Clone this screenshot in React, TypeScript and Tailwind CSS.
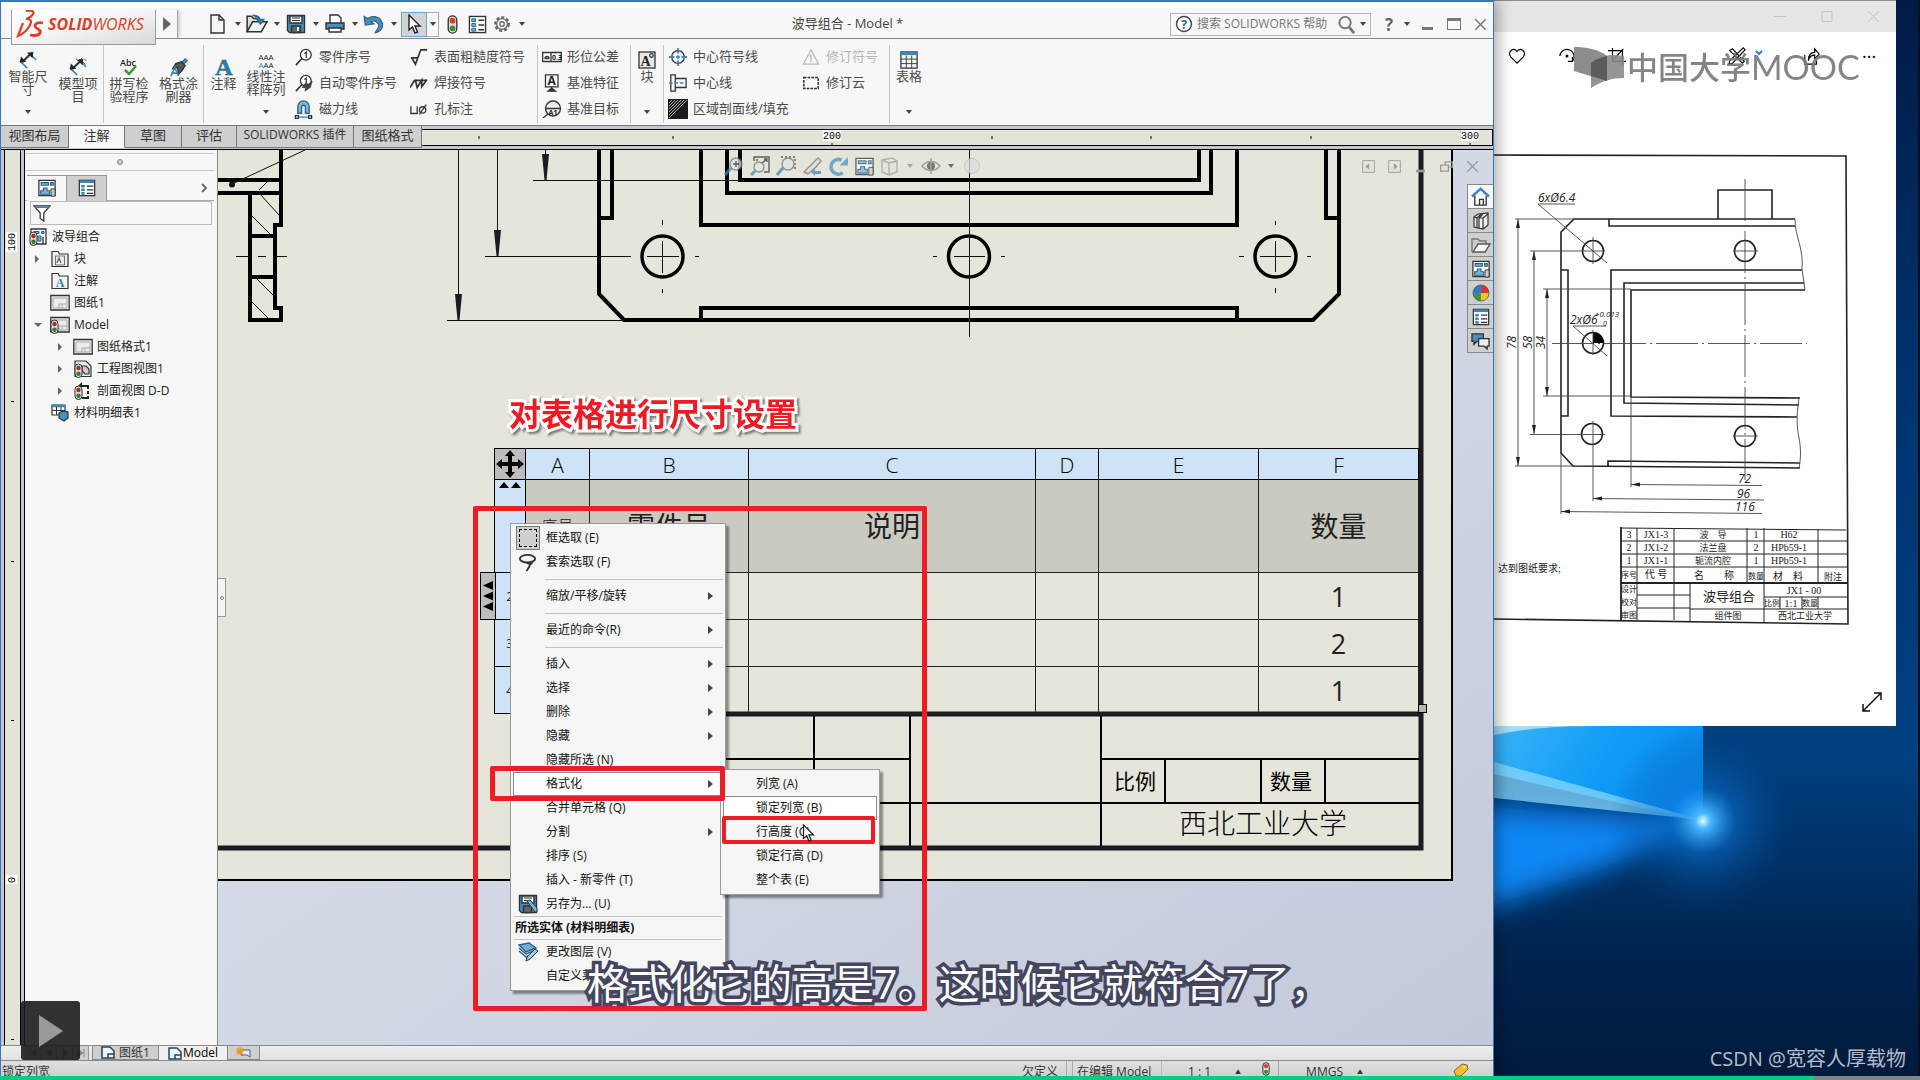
import type { ReactNode } from "react";

const INK = "#2f3437";
const BLUE = "#3f86b4";

function Svg({ s = 18, children, cls = "" }: { s?: number; children: ReactNode; cls?: string }) {
  return (
    <svg width={s} height={s} viewBox="0 0 20 20" fill="none" stroke={INK} strokeWidth="1.4" className={cls} aria-hidden="true">
      {children}
    </svg>
  );
}

const Caret = ({ cls = "" }: { cls?: string }) => (
  <svg width="6" height="4" viewBox="0 0 6 4" fill="#444" className={cls} aria-hidden="true">
    <path d="M0 0h6L3 4z" />
  </svg>
);

/* ---------- icons ---------- */
const NewDoc = () => (
  <Svg s={20}>
    <path d="M3 1h8l5 5v13H3z" fill="#f4f4f4" />
    <path d="M11 1v5h5" />
  </Svg>
);
const OpenDoc = () => (
  <Svg s={22}>
    <path d="M1 17V3h4l2 2h4" fill="#ddd" />
    <path d="M1 17l5-9h13l-5 9z" fill="#f0f0f0" />
    <path d="M6 2c5 0 7 2 7 6M10 6l3 4 3-4z" stroke="#2b6c96" fill={BLUE} />
  </Svg>
);
const Save = () => (
  <Svg s={20}>
    <path d="M1.500 1.500h17v17h-15l-2-2z" fill="#4b8fbd" />
    <path d="M4 2h12v7H4z" fill="#f3f3f3" />
    <path d="M6 4h8M6 6.500h8" strokeWidth="1" />
    <path d="M5.500 12h9v6.500h-9z" fill="#666" />
    <path d="M11 13h2v4h-2z" fill="#fff" stroke="none" />
  </Svg>
);
const SaveAs = () => (
  <Svg s={20}>
    <path d="M1.500 1.500h17v17h-15l-2-2z" fill="#4b8fbd" />
    <path d="M4 2h12v7H4z" fill="#f3f3f3" />
    <path d="M6 4h8M6 6.500h5" strokeWidth="1" />
    <path d="M5.500 12h8v6.500h-8z" fill="#666" />
    <path d="M9 7l3-1 7 8v4h-2z" fill="#7db7d8" strokeWidth="1" />
  </Svg>
);
const Print = () => (
  <Svg s={20}>
    <path d="M5 9V1h8l3 3v5" fill="#fff" />
    <path d="M1 9h18v6H1z" fill="#4b8fbd" />
    <path d="M4 14h12v4H4z" fill="#fff" />
  </Svg>
);
const Undo = () => (
  <Svg s={22}>
    <path d="M1 3l1 8 8-1-3-2c4-2 8 1 7 5l-3 5c6-1 8-6 6-10C15 3 9 2 4 5z" fill="#4b8fbd" stroke="#2b5f85" strokeWidth="1" />
  </Svg>
);
const Pointer = ({ s = 20 }: { s?: number }) => (
  <Svg s={s}>
    <path d="M5 1v15l3.500-3 2.500 6 2.500-1-2.500-6h5z" fill="#fff" stroke="#222" />
  </Svg>
);
const Traffic = ({ s = 20 }: { s?: number }) => (
  <Svg s={s}>
    <rect x="5.500" y="1" width="9" height="18" rx="4.500" fill="#ddd" />
    <circle cx="10" cy="6" r="3" fill="#d8401f" stroke="none" />
    <circle cx="10" cy="14" r="3" fill="#3b8a35" stroke="none" />
  </Svg>
);
const ListIcon = ({ s = 18 }: { s?: number }) => (
  <Svg s={s}>
    <rect x="1.500" y="1.500" width="17" height="17" fill="#fff" />
    <path d="M2 3h16" stroke={BLUE} strokeWidth="3" />
    <path d="M4 7h3v2H4zM4 11h3v2H4zM4 15h3v2H4z" stroke={BLUE} fill={BLUE} strokeWidth="1" />
    <path d="M10 8h7M10 12h7M10 16h7" />
  </Svg>
);
const PropsIcon = () => (
  <Svg s={19}>
    <rect x="1.500" y="1.500" width="17" height="17" fill="#fff" />
    <path d="M4 4h4v3H4zM4 9h4v3H4zM4 14h4v3H4z" stroke="#225f86" fill="#7db7d8" strokeWidth="1" />
    <path d="M11 5.500h6M11 10.500h6M11 15.500h6" />
  </Svg>
);
const Gear = () => (
  <Svg s={18}>
    <circle cx="10" cy="10" r="7.500" stroke="#666" strokeDasharray="3.500 2.200" strokeWidth="2.500" />
    <circle cx="10" cy="10" r="6" stroke="#666" fill="#f7f7f7" />
    <circle cx="10" cy="10" r="2.500" stroke="#666" />
  </Svg>
);
const DrawingIcon = ({ s = 18 }: { s?: number }) => (
  <Svg s={s}>
    <path d="M1 1.500h18v17H1z" fill="#fff" />
    <path d="M3.500 4h8v3h-8zM14 4h3v3h-3zM6 10h4v3h3v4H3v-4h3z" fill="#7db7d8" stroke="#225f86" strokeWidth="1.200" />
    <path d="M14.500 11H19v8h-4.500z" fill="#ccc" strokeWidth="1" />
  </Svg>
);
const SmartDim = ({ items = false }: { items?: boolean }) => (
  <Svg s={18}>
    <path d="M1 11l8 8M11 2l8 8" stroke={BLUE} strokeWidth="1.800" />
    <path d="M4 12l9-9" strokeWidth="2.200" />
    <path d="M1 13l1-7 6 6zM16 1l-7 1 6 6z" fill="#222" stroke="none" />
    {items && <path d="M12 1l6 6M17 1l2 2M8 1l2 2M14 0v3" strokeWidth="1" />}
  </Svg>
);
const Spell = () => (
  <svg width="20" height="18" viewBox="0 0 20 18" className="overflow-visible" aria-hidden="true">
    <text x="1" y="8" fontSize="9" fontFamily="Open Sans, sans-serif" fontWeight="600" fill="#222">Abc</text>
    <path d="M6 12l4 4 7-8" fill="none" stroke="#3b9a2c" strokeWidth="2.500" />
  </svg>
);
const Painter = () => (
  <Svg s={19}>
    <path d="M13 5l4-4 2 2-4 4z" fill="#4b9fd0" stroke="#2b6c96" />
    <path d="M7 6l6-2 4 4-3 5-4 4-1-7-5 1z" fill="#555" />
    <path d="M2 19l4-9 4 9M3.500 16h5" stroke={BLUE} strokeWidth="1.800" />
  </Svg>
);
const NoteA = () => (
  <svg width="18" height="18" viewBox="0 0 18 18" className="overflow-visible" aria-hidden="true">
    <text x="9" y="17" textAnchor="middle" fontSize="24" fontFamily="Liberation Serif, serif" fontWeight="bold" fill="#2b7fae" stroke="#1d5475" strokeWidth="0.500">A</text>
  </svg>
);
const NoteArray = () => (
  <svg width="20" height="18" viewBox="0 0 20 18" className="overflow-visible" aria-hidden="true">
    <text x="10" y="9" textAnchor="middle" fontSize="8" fontFamily="Open Sans, sans-serif" fill="#222">AAA</text>
    <text x="10" y="17" textAnchor="middle" fontSize="8" fontFamily="Open Sans, sans-serif" fill="#222"><tspan fill="#2b7fae">A</tspan>AA</text>
  </svg>
);
const Balloon = ({ auto = false }: { auto?: boolean }) => (
  <Svg s={18}>
    <circle cx="12" cy="7.500" r="6" fill="#fff" />
    <path d="M7.500 12L1 19" strokeWidth="1.800" />
    <path d="M10.500 6l2-1.500V11" />
    {auto && <path d="M8 15l3-4h5l3-3-2 7-6 4 1-4z" fill="#444" strokeWidth="0.800" />}
  </Svg>
);
const Magnet = () => (
  <Svg s={19}>
    <path d="M4 14V7a6 6 0 0112 0v7h-4V7.500a2 2 0 00-4 0V14z" fill="#7db7d8" stroke="#2b5f85" />
    <path d="M3 18h14" stroke={BLUE} />
    <path d="M1.500 16.500h3v3h-3zM15.500 16.500h3v3h-3z" fill="#fff" />
  </Svg>
);
const Surface = () => (
  <Svg s={18}>
    <path d="M2 11l4 7L12 2h7M1 11h8" strokeWidth="1.900" />
  </Svg>
);
const Weld = () => (
  <Svg s={18}>
    <path d="M0 15L5 7h14M6 7l2 8 5-8v7l6-8" strokeWidth="1.900" />
  </Svg>
);
const Hole = () => (
  <Svg s={18}>
    <path d="M1 7v8h7V7" />
    <circle cx="14" cy="11" r="3.500" />
    <path d="M10.500 16L18 5" />
  </Svg>
);
const Gtol = () => (
  <svg width="20" height="18" viewBox="0 0 20 18" fill="none" stroke={INK} strokeWidth="1.300" aria-hidden="true">
    <path d="M.7 4.500h18.600v9H.7zM9 4.500v9" fill="#fff" />
    <path d="M3 10.500a2 2 0 014 0z" />
    <text x="10" y="12" fontSize="7" fontFamily="Open Sans, sans-serif" fontWeight="bold" fill="#222" stroke="none">0.3</text>
  </svg>
);
const Datum = () => (
  <svg width="20" height="18" viewBox="0 0 20 18" fill="none" stroke={INK} strokeWidth="1.300" aria-hidden="true">
    <path d="M3.500 .8h12.500v12H3.500z" fill="#fff" />
    <path d="M9.700 12.500V17M6 17.200h7.500L9.700 14z" fill="#222" />
    <text x="9.700" y="11" textAnchor="middle" fontSize="12" fontFamily="Open Sans, sans-serif" fontWeight="bold" fill="#222" stroke="none">A</text>
  </svg>
);
const Target = () => (
  <svg width="20" height="18" viewBox="0 0 20 18" fill="none" stroke={INK} strokeWidth="1.300" aria-hidden="true">
    <circle cx="11" cy="8.500" r="7.500" fill="#eee" />
    <path d="M3.500 8.500h15M6 14l-5 4" />
    <text x="11" y="15" textAnchor="middle" fontSize="7" fontFamily="Open Sans, sans-serif" fontWeight="bold" fill="#222" stroke="none">A1</text>
  </svg>
);
const BlockIcon = () => (
  <svg width="18" height="18" viewBox="0 0 18 18" fill="none" stroke={INK} strokeWidth="1.300" aria-hidden="true">
    <rect x="1" y="1" width="16" height="16" fill="#e8e8e8" />
    <text x="7.500" y="15" textAnchor="middle" fontSize="14" fontFamily="Liberation Serif, serif" fontWeight="bold" fill="#222" stroke="none">A</text>
    <circle cx="13.500" cy="4.500" r="1.800" />
  </svg>
);
const CenterMark = () => (
  <Svg s={18}>
    <circle cx="10" cy="10" r="7" />
    <path d="M10 0v6M10 14v6M0 10h6M14 10h6M10 8v4M8 10h4" stroke={BLUE} strokeWidth="2" />
  </Svg>
);
const CenterLine = () => (
  <Svg s={18}>
    <path d="M2 1h5v18H2zM7 5h12v10H7z" fill="#f4f4f4" />
    <path d="M0 10h20" stroke={BLUE} strokeDasharray="4 2" />
  </Svg>
);
const Hatch = () => (
  <svg width="20" height="20" viewBox="0 0 20 20" aria-hidden="true">
    <path d="M0 0h20v20H0z" fill="#1c1c1c" />
    <path d="M1 4l3-3M1 7l6-6M1 10l9-9M1 13L13 1M1 16L16 1M1 19L19 1" stroke="#d4d4d4" strokeWidth="0.800" />
    <path d="M19.500 3v16.500H3z" fill="#1c1c1c" opacity="0.850" />
  </svg>
);
const RevSymbol = () => (
  <Svg s={18}>
    <path d="M10 2l8.500 16h-17z" stroke="#bbb" />
    <path d="M8.500 9.500L10 8v8" stroke="#bbb" />
  </Svg>
);
const Cloud = () => (
  <Svg s={18}>
    <path d="M2 4h16v12H2z" strokeDasharray="3 1.200" strokeWidth="1.700" />
  </Svg>
);
const TableIcon = () => (
  <Svg s={18}>
    <path d="M1 1h18v18H1z" fill="#f6f6f6" />
    <path d="M1 2.500h18" stroke={BLUE} strokeWidth="4" />
    <path d="M1 9h18M1 14h18M7 5v14M13 5v14" strokeWidth="1" />
  </Svg>
);
const Folder = ({ glyph }: { glyph: "A" | "B" }) => (
  <svg width="18" height="18" viewBox="0 0 18 18" fill="none" stroke={INK} strokeWidth="1.200" aria-hidden="true">
    <path d="M1 16.500V1.500h6l1.500 2.500H17v12.500z" fill="#f3f3f3" />
    {glyph === "A" ? (
      <text x="9" y="15" textAnchor="middle" fontSize="12" fontFamily="Liberation Serif, serif" fontWeight="bold" fill="#2b7fae" stroke="none">A</text>
    ) : (
      <>
        <path d="M4.500 6h9v9h-9z" stroke="#777" />
        <path d="M6 13l2-5 2 5" stroke="#555" />
      </>
    )}
  </svg>
);
const Sheet = ({ dot = false }: { dot?: boolean }) => (
  <svg width="20" height="18" viewBox="0 0 20 18" fill="none" stroke={INK} strokeWidth="1.300" aria-hidden="true">
    <path d="M.8 1.500h18.400v14.500H.8z" fill="#ececec" />
    <path d="M3 4h14v10H3zM9 14V10h8M12 10v4" stroke="#aaa" strokeWidth="1" />
    {dot && <Lights />}
  </svg>
);
const Lights = () => (
  <>
    <rect x="1" y="4" width="7" height="13.500" rx="3.500" fill="#ddd" stroke={INK} strokeWidth="1" />
    <circle cx="4.500" cy="8" r="2.200" fill="#b52a1c" stroke="none" />
    <circle cx="4.500" cy="13.800" r="2.200" fill="#3b7a35" stroke="none" />
  </>
);
const RootIcon = () => (
  <svg width="18" height="18" viewBox="0 0 18 18" fill="none" stroke={INK} strokeWidth="1.300" aria-hidden="true">
    <path d="M2 1h15v15H2z" fill="#fff" />
    <path d="M5 3.500h5v2H5zM12.500 3.500h2.500v2h-2.500zM9 8h3v5H9z" fill="#7db7d8" stroke="#225f86" strokeWidth="1" />
    <path d="M14 9v7" />
    <Lights />
  </svg>
);
const ViewIcon = () => (
  <svg width="18" height="18" viewBox="0 0 18 18" fill="none" stroke={INK} strokeWidth="1.200" aria-hidden="true">
    <path d="M1 1h11l5 5v10.500H1z" fill="#eee" />
    <path d="M8 6h4l3 3v5h-4l-3-3z" fill="#ccc" />
    <Lights />
  </svg>
);
const SectionIcon = () => (
  <svg width="18" height="18" viewBox="0 0 18 18" fill="none" stroke="#222" strokeWidth="2" aria-hidden="true">
    <path d="M14 7V4H8M14 9v3M14 14v2H8" />
    <path d="M4 4l4-4v7z" fill="#222" stroke="none" />
    <Lights />
  </svg>
);
const BomIcon = () => (
  <svg width="18" height="18" viewBox="0 0 18 18" fill="none" stroke={INK} strokeWidth="1.200" aria-hidden="true">
    <path d="M1 1h13v10H1z" fill="#fff" />
    <path d="M1 2h13" stroke={BLUE} strokeWidth="2.500" />
    <path d="M1 6.500h13M5.500 3v8M10 3v8" strokeWidth="1" />
    <path d="M8 9l4-2 5 1v6l-4 3-5-3z" fill="#4b8fbd" />
  </svg>
);
const Funnel = () => (
  <Svg s={18}>
    <path d="M1 2h18l-7 8v9l-4-3v-6z" fill="#fff" />
    <path d="M2 3.500h16" stroke={BLUE} strokeWidth="2" />
  </Svg>
);
const SheetTab = () => (
  <svg width="14" height="13" viewBox="0 0 14 13" fill="none" stroke="#24455c" strokeWidth="1.500" aria-hidden="true">
    <path d="M1 1h8l4 4v7H1z" fill="#eaf3fa" />
    <path d="M7 12V8h6" />
  </svg>
);

/* ---------- title bar ---------- */
function TitleBar() {
  const tools: [string, ReactNode][] = [
    ["新建", <NewDoc />],
    ["打开", <OpenDoc />],
    ["保存", <Save />],
    ["打印", <Print />],
    ["撤消", <Undo />],
  ];
  return (
    <header className="flex h-[39px] shrink-0 items-center border-b border-[#858585] border-t-2 border-t-[#3a78b5] bg-[#f7f7f7] pt-[8px] shadow-[inset_0_6px_0_#fff]">
      <div className="relative z-10 ml-[10px] flex h-[35px] w-[145px] shrink-0 items-center gap-1 self-start border border-t-0 border-[#9a9a9a] bg-gradient-to-br from-white via-[#f4f4f4] to-[#d8d8d8] pb-[6px] pl-[4px]">
        <svg width="28" height="28" viewBox="0 0 28 28" fill="none" stroke="#d8402c" strokeWidth="2.200" aria-hidden="true">
          <path d="M10 1c5-1 9 0 7 3-1 2-4 4-7 5 5 0 6 2 4 6-2 4-7 9-12 11l5-13" />
          <path d="M27 13c-4-1-8 0-8 3 0 3 7 3 5 7-1 2-5 3-10 2" strokeWidth="2.800" />
        </svg>
        <span className="font-['Open_Sans'] text-[16px] italic leading-none text-[#d8402c]">
          <b>SOLID</b>WORKS
        </span>
      </div>
      <div className="mr-[29px] flex h-full w-[22px] shrink-0 items-center justify-center border-r border-[#aaa] shadow-[3px_0_3px_-1px_#ccc]">
        <svg width="8" height="14" viewBox="0 0 8 14" fill="#666" aria-hidden="true"><path d="M0 0l8 7-8 7z" /></svg>
      </div>
      {tools.map(([name, icon]) => (
        <button key={name} aria-label={name} className="flex w-[39px] shrink-0 items-center">
          <span className="flex w-[22px] justify-center">{icon}</span>
          <span className="flex flex-1 justify-center"><Caret /></span>
        </button>
      ))}
      <button aria-label="选择" className="-ml-px flex h-[25px] w-[26px] shrink-0 items-center justify-center border border-[#6fa3c8] bg-[#d2d3d5]"><Pointer /></button>
      <button aria-label="选择选项" className="flex h-[25px] w-[12px] shrink-0 items-center justify-center border border-l-0 border-[#aaa]"><Caret /></button>
      <button aria-label="重建" className="ml-[4px] shrink-0"><Traffic s={19} /></button>
      <button aria-label="文件属性" className="ml-[6px] shrink-0"><PropsIcon /></button>
      <button aria-label="选项" className="ml-[6px] shrink-0"><Gear /></button>
      <Caret cls="ml-[8px] shrink-0" />
      <h1 className="flex-1 text-center text-[13px] text-[#444]">波导组合 - Model *</h1>
      <form className="flex h-[23px] w-[201px] shrink-0 items-center border border-[#b5b5b5] bg-[#f7f7f7] pl-[4px]">
        <svg width="18" height="18" viewBox="0 0 18 18" aria-hidden="true">
          <circle cx="9" cy="9" r="7.500" fill="#fff" stroke="#444" strokeWidth="1.400" />
          <text x="9" y="13.500" textAnchor="middle" fontSize="13" fontWeight="bold" fontFamily="Open Sans, sans-serif" fill="#2b6c96">?</text>
        </svg>
        <input aria-label="搜索帮助" placeholder="搜索 SOLIDWORKS 帮助" className="ml-1 w-[140px] bg-transparent text-[12px] outline-none placeholder:text-[#777]" />
        <button type="button" aria-label="搜索" className="flex items-center gap-1">
          <Svg s={19}><circle cx="8.500" cy="8" r="6" stroke="#777" strokeWidth="2" /><path d="M13 13l5 6" stroke="#777" strokeWidth="3" /></Svg>
        </button>
        <Caret cls="ml-1" />
      </form>
      <button aria-label="帮助" className="ml-[7px] w-[22px] shrink-0 text-[17px] font-bold leading-none text-[#666]">?</button>
      <span className="flex w-[14px] shrink-0 justify-center"><Caret /></span>
      <button aria-label="最小化" className="flex w-[26px] shrink-0 justify-center"><span className="mt-[9px] h-[3px] w-[11px] bg-[#777]" /></button>
      <button aria-label="最大化" className="flex w-[27px] shrink-0 justify-center"><span className="h-[12px] w-[14px] border border-t-[3px] border-[#777]" /></button>
      <button aria-label="关闭" className="flex w-[26px] shrink-0 justify-center"><Svg s={13}><path d="M2 2l16 16M18 2L2 18" stroke="#777" strokeWidth="2.200" /></Svg></button>
    </header>
  );
}

/* ---------- ribbon ---------- */
function Big({ icon, lines, w, high, drop }: { icon: ReactNode; lines: string[]; w: string; high?: boolean; drop?: boolean }) {
  return (
    <button className={`flex h-full shrink-0 flex-col items-center text-[13px] leading-[13px] ${w} ${high ? "pt-[12px]" : "pt-[19px]"}`}>
      <span className="mb-px flex h-[18px] items-center">{icon}</span>
      {lines.map((l) => <span key={l} className="whitespace-nowrap">{l}</span>)}
      {drop && <Caret cls="mb-[11px] mt-auto" />}
    </button>
  );
}
function Stack({ items, w, off }: { items: [ReactNode, string][]; w: string; off?: number }) {
  return (
    <div className={`flex shrink-0 flex-col pt-[5px] ${w}`}>
      {items.map(([icon, label], i) => (
        <button key={label} disabled={off === i} className="flex h-[26px] items-center whitespace-nowrap text-[13px] disabled:text-[#b5b5b5]">
          <span className="mr-[5px] flex w-[21px] justify-center">{icon}</span>
          {label}
        </button>
      ))}
    </div>
  );
}
const Sep = () => <div className="mb-[2px] mt-[6px] w-px shrink-0 bg-[#c6c6c6]" />;

function Ribbon() {
  return (
    <nav aria-label="注解工具" className="flex h-[87px] shrink-0 overflow-hidden border-b border-[#77777f] bg-[#f7f7f7] pl-[2px] text-[#4a4a4a]">
      <Big icon={<SmartDim />} lines={["智能尺", "寸"]} w="w-[50px]" high drop />
      <Big icon={<SmartDim items />} lines={["模型项", "目"]} w="w-[50px]" />
      <Sep />
      <Big icon={<Spell />} lines={["拼写检", "验程序"]} w="w-[50px]" />
      <Big icon={<Painter />} lines={["格式涂", "刷器"]} w="w-[49px]" />
      <Sep />
      <Big icon={<NoteA />} lines={["注释"]} w="w-[39px]" />
      <Big icon={<NoteArray />} lines={["线性注", "释阵列"]} w="w-[46px]" high drop />
      <Stack w="ml-[4px] w-[115px]" items={[[<Balloon />, "零件序号"], [<Balloon auto />, "自动零件序号"], [<Magnet />, "磁力线"]]} />
      <Stack w="w-[129px]" items={[[<Surface />, "表面粗糙度符号"], [<Weld />, "焊接符号"], [<Hole />, "孔标注"]]} />
      <Sep />
      <Stack w="ml-[3px] w-[89px]" items={[[<Gtol />, "形位公差"], [<Datum />, "基准特征"], [<Target />, "基准目标"]]} />
      <Sep />
      <Big icon={<BlockIcon />} lines={["块"]} w="w-[32px]" high drop />
      <Sep />
      <Stack w="ml-[3px] w-[133px]" items={[[<CenterMark />, "中心符号线"], [<CenterLine />, "中心线"], [<Hatch />, "区域剖面线/填充"]]} />
      <Stack w="w-[89px]" off={0} items={[[<RevSymbol />, "修订符号"], [<Cloud />, "修订云"]]} />
      <Sep />
      <Big icon={<TableIcon />} lines={["表格"]} w="w-[38px]" high drop />
    </nav>
  );
}

function CommandTabs() {
  const tabs: [string, string][] = [
    ["视图布局", "w-[68px] text-[13px]"],
    ["注解", "w-[56px] text-[13px]"],
    ["草图", "w-[57px] text-[13px]"],
    ["评估", "w-[55px] text-[13px]"],
    ["SOLIDWORKS 插件", "w-[117px] text-[12px]"],
    ["图纸格式", "w-[68px] text-[13px]"],
  ];
  return (
    <div className="flex h-[24px] shrink-0 border-b border-black bg-[#c3c5d3]">
      <div role="tablist" className="flex h-[22px]">
        {tabs.map(([t, w]) => (
          <button
            key={t}
            role="tab"
            aria-selected={t === "注解"}
            className={`shrink-0 whitespace-nowrap border-b border-r border-[#77777f] bg-[#cfcfcf] pb-[3px] leading-[18px] text-[#333] aria-selected:border-b-[#f7f7f7] aria-selected:bg-[#f7f7f7] ${w}`}
          >
            {t}
          </button>
        ))}
      </div>
      <div className="mb-[3px] mt-[3px] min-w-0 flex-1 overflow-hidden border border-l-0 border-black bg-[#e3e3d8]">
        <svg width="1071" height="15" viewBox="422 130 1071 15" aria-hidden="true">
          <path d="M479 136v3M673 136v3M992 136v3M1151 136v3M1311 136v3M832 143v2M1470 143v2" stroke="#000" />
          <path d="M823 130h18v11h-18zM1461 130h18v11h-18z" fill="#fff" />
          <text x="832" y="139" textAnchor="middle" fontSize="10" fontFamily="Liberation Mono, monospace">200</text>
          <text x="1470" y="139" textAnchor="middle" fontSize="10" fontFamily="Liberation Mono, monospace">300</text>
        </svg>
      </div>
    </div>
  );
}

/* ---------- feature tree ---------- */
function Row({ depth, icon, label, arrow }: { depth: 0 | 1 | 2; icon: ReactNode; label: string; arrow?: "r" | "d" }) {
  const pad = depth === 0 ? "pl-[3px]" : depth === 1 ? "pl-[7px]" : "pl-[30px]";
  return (
    <li className={`flex h-[22px] items-center text-[12px] text-[#222] ${pad}`}>
      {depth > 0 && (
        <span className="flex w-[18px] pl-[2px]">
          {arrow && (
            <svg width="8" height="8" viewBox="0 0 8 8" fill="#666" aria-hidden="true">
              <path d={arrow === "r" ? "M1 0l4 4-4 4z" : "M0 2h8L4 6z"} />
            </svg>
          )}
        </span>
      )}
      <span className="mr-[4px] flex w-[20px] justify-center">{icon}</span>
      {label}
    </li>
  );
}

function FeaturePanel() {
  return (
    <aside className="flex w-[193px] shrink-0 flex-col border-r border-[#888] bg-[#f7f7f7]">
      <div className="mr-[3px] mt-[3px] flex h-[18px] items-center justify-center border-y border-[#c4c8c8]">
        <span className="size-[6px] rounded-full border border-[#888] bg-[#ccc]" />
      </div>
      <div className="mr-[3px] mt-[4px] flex h-[26px] items-center border-b border-[#aaa] pl-[2px]">
        <button aria-label="设计树" className="flex h-[26px] w-[40px] items-center justify-center border-r border-t border-[#999] bg-[#f7f7f7]"><DrawingIcon /></button>
        <button aria-label="属性" className="flex h-[26px] w-[40px] items-center justify-center border-r border-t border-[#999] bg-[#cfcfcf]"><ListIcon /></button>
        <svg className="ml-auto mr-[6px]" width="7" height="10" viewBox="0 0 7 10" fill="none" stroke="#666" strokeWidth="1.800" aria-hidden="true"><path d="M1 1l4 4-4 4" /></svg>
      </div>
      <label className="ml-[5px] mr-[5px] flex h-[24px] items-center border border-[#bbb] pl-[2px]">
        <Funnel />
        <input aria-label="筛选" className="min-w-0 flex-1 bg-transparent text-[12px] outline-none" />
      </label>
      <ul className="pt-px">
        <Row depth={0} icon={<RootIcon />} label="波导组合" />
        <Row depth={1} icon={<Folder glyph="B" />} label="块" arrow="r" />
        <Row depth={1} icon={<Folder glyph="A" />} label="注解" />
        <Row depth={1} icon={<Sheet />} label="图纸1" />
        <Row depth={1} icon={<Sheet dot />} label="Model" arrow="d" />
        <Row depth={2} icon={<Sheet />} label="图纸格式1" arrow="r" />
        <Row depth={2} icon={<ViewIcon />} label="工程图视图1" arrow="r" />
        <Row depth={2} icon={<SectionIcon />} label="剖面视图 D-D" arrow="r" />
        <Row depth={1} icon={<BomIcon />} label="材料明细表1" />
      </ul>
    </aside>
  );
}

/* ---------- drawing sheet ---------- */
function CadDrawing() {
  const arrow = (x: number, y: number) => <path d={`M${x - 3.500} ${y - 26}h7l-2.500 26h-2z`} fill="#1b1b24" />;
  const cjk = "Noto Sans CJK SC, sans-serif";
  return (
    <svg width="1275" height="895" viewBox="218 150 1275 895" className="absolute left-0 top-0" aria-hidden="true">
      <path d="M218 150h1234v730H218z" fill="#e5e5da" />
      <path d="M1452 150v730H218" fill="none" stroke="#000" strokeWidth="2" />
      <path d="M1421 150v698H218" fill="none" stroke="#1b1b24" strokeWidth="5" />
      <g fill="none" stroke="#000" strokeWidth="4">
        <path d="M281 150v43M218 180h63M218 193h63v32h-6v83h6v12h-31V193M250 236h25M250 277h25" />
        <path d="M599 150v144l25 26h689l26-26V150M599 218h13v-68M1339 218h-13v-68" />
        <path d="M701 150v75h536v-75M727 150v43h484v-43M740 150v30h459v-30M701 320v-12h536v12" />
        <circle cx="662.500" cy="256.500" r="20.500" strokeWidth="3.500" />
        <circle cx="969" cy="256.500" r="20.500" strokeWidth="3.500" />
        <circle cx="1275.500" cy="256.500" r="20.500" strokeWidth="3.500" />
      </g>
      <g fill="none" stroke="#111" strokeWidth="1">
        <path d="M232 184l73-34M259 193l20 22M252 216l18 18M259 190l9-9M257 279l16 16M252 302l16 16" />
        <path d="M236 256.500h14M258 256.500h8M275 256.500h12" />
        <path d="M458.500 150v170M447 320.500h177M497.500 150v106M485 256.500h146M545.500 150v30M533 180.500h207" />
        <path d="M647 256.500h32M695 256.500h4M662.500 241v32M662.500 220v5M662.500 289v4" />
        <path d="M954 256.500h31M933 256.500h4M1001 256.500h4M969.500 150v187" />
        <path d="M1260 256.500h31M1239 256.500h5M1307 256.500h4M1275.500 241v31M1275.500 221v4M1275.500 288v5" />
      </g>
      <circle cx="232" cy="184.500" r="3" fill="#111" />
      {arrow(458.500, 320)}
      {arrow(497.500, 256)}
      {arrow(545.500, 180)}
      <path d="M590 714h831" stroke="#1b1b24" strokeWidth="5" />
      <path d="M590 759h320M590 803h830M814 716v87M910 716v130M1101 716v130M1101 759h318M1165 759v44M1261 759v44M1325 759v44" stroke="#000" strokeWidth="2" />
      <g fontFamily={cjk} textAnchor="middle" fill="#000" fontWeight="400">
        <text x="1135" y="789" fontSize="21">比例</text>
        <text x="1291" y="789" fontSize="21">数量</text>
        <text x="1263" y="834" fontSize="28" fontWeight="300">西北工业大学</text>
      </g>
    </svg>
  );
}

function BomTable() {
  const cell = "border border-[#222]";
  return (
    <table className="absolute left-[276px] top-[298px] w-[924px] table-fixed border-collapse text-center text-[#222]">
      <colgroup>
        <col className="w-[31px]" /><col className="w-[64px]" /><col className="w-[159px]" /><col className="w-[287px]" />
        <col className="w-[63px]" /><col className="w-[160px]" /><col className="w-[160px]" />
      </colgroup>
      <thead>
        <tr className="h-[31px] bg-[#cce3f8] font-['Liberation_Sans_Narrow','Open_Sans'] text-[21px] font-light leading-none text-black">
          <th className="border border-black bg-[#bdbdbd] p-0" aria-label="移动表格">
            <svg width="28" height="28" viewBox="0 0 28 28" className="mx-auto block" aria-hidden="true">
              <path d="M14 3v22M3 14h22" stroke="#000" strokeWidth="4" />
              <path d="M14 0l5 6H9zM14 28l5-6H9zM0 14l6-5v10zM28 14l-6-5v10z" />
            </svg>
          </th>
          {["A", "B", "C", "D", "E", "F"].map((c) => <th key={c} className="border border-black p-0 pt-[2px] font-light">{c}</th>)}
        </tr>
      </thead>
      <tbody className="leading-none">
        <tr className="h-[93px] bg-[#cbcac1] text-[28px]">
          <th className="border border-black bg-[#cce3f8] p-0 align-top">
            <svg width="24" height="9" viewBox="0 0 24 9" className="mx-auto block" aria-hidden="true"><path d="M1 8l5-6 5 6zM13 8l5-6 5 6z" /></svg>
          </th>
          <td className={`${cell} p-0 text-[16px] font-light`}>序号</td>
          <td className={`${cell} p-0`}>零件号</td>
          <td className={`${cell} p-0`}>说明</td>
          <td className={cell} />
          <td className={cell} />
          <td className={`${cell} p-0`}>数量</td>
        </tr>
        {["1", "2", "1"].map((q, i) => (
          <tr key={i} className="h-[47px]">
            <th className="border border-black bg-[#cce3f8] p-0 text-[13px] font-normal">{i + 2}</th>
            <td className={cell} /><td className={cell} /><td className={cell} /><td className={cell} /><td className={cell} />
            <td className={`${cell} p-0 text-[27px]`}>{q}</td>
          </tr>
        ))}
      </tbody>
    </table>
  );
}

/* ---------- menus ---------- */
const MenuArrow = () => <svg width="5" height="8" viewBox="0 0 5 8" fill="#444" className="ml-auto" aria-hidden="true"><path d="M0 0l5 4-5 4z" /></svg>;

function Item({ label, icon, sub, on }: { label: string; icon?: ReactNode; sub?: boolean; on?: boolean }) {
  return (
    <button
      role="menuitem"
      className={`mx-[2px] flex h-[24px] items-center border pr-[9px] text-left text-[12px] text-[#111] ${on ? "border-[#888] bg-white" : "border-transparent"}`}
    >
      <span className="mr-[5px] flex w-[27px] shrink-0 justify-center">{icon}</span>
      {label}
      {sub && <MenuArrow />}
    </button>
  );
}
const Rule = () => <div className="ml-[34px] mr-[2px] flex h-[10px] shrink-0 items-center"><div className="h-px w-full bg-[#c4c4c4]" /></div>;

function ContextMenu() {
  return (
    <div role="menu" className="absolute left-[292px] top-[373px] flex w-[216px] flex-col border border-[#999] bg-[#f6f6f6] py-[2px] shadow-[3px_3px_2px_#00000066]">
      <Item label="框选取 (E)" icon={<span className="flex size-[24px] items-center justify-center border border-[#777] bg-[#cfcfd3]"><span className="size-[18px] border border-dashed border-black" /></span>} />
      <Item label="套索选取 (F)" icon={<Svg s={19}><ellipse cx="10" cy="6" rx="8" ry="4" strokeWidth="2" /><path d="M14 9c2 2-1 3-3 2 4-1 0 5-2 8" strokeWidth="2" /></Svg>} />
      <Rule />
      <Item label="缩放/平移/旋转" sub />
      <Rule />
      <Item label="最近的命令(R)" sub />
      <Rule />
      <Item label="插入" sub />
      <Item label="选择" sub />
      <Item label="删除" sub />
      <Item label="隐藏" sub />
      <Item label="隐藏所选 (N)" />
      <Item label="格式化" sub on />
      <Item label="合并单元格 (Q)" />
      <Item label="分割" sub />
      <Item label="排序 (S)" />
      <Item label="插入 - 新零件 (T)" />
      <Item label="另存为... (U)" icon={<SaveAs />} />
      <div className="mx-[3px] h-[24px] border-y border-[#c4c4c4] pl-px text-[12px] font-bold leading-[22px] text-[#111]">所选实体 (材料明细表)</div>
      <Item
        label="更改图层 (V)"
        icon={<Svg s={20}><path d="M1 9l7 6 10-5M1 6l7 6 10-4" fill="#e8f2f8" stroke="#2b5f85" /><path d="M1 3l10-2 7 5-10 4z" fill="#6fb0d6" stroke="#2b5f85" /><path d="M9 15l8-8 3 2-8 8-4 2z" fill="#9ccbe6" strokeWidth="1" /></Svg>}
      />
      <Item label="自定义菜单(M)" />
    </div>
  );
}

function SubMenu() {
  return (
    <div role="menu" className="absolute left-[502px] top-[619px] flex w-[160px] flex-col border border-[#999] bg-[#f6f6f6] py-[2px] shadow-[3px_3px_2px_#00000066]">
      <Item label="列宽 (A)" />
      <Item label="锁定列宽 (B)" on />
      <Item label="行高度 (C)" />
      <Item label="锁定行高 (D)" />
      <Item label="整个表 (E)" />
    </div>
  );
}

function ViewTools() {
  const lens = (
    <>
      <circle cx="12" cy="8" r="6" fill="#dfe6ea" stroke="#777" />
      <path d="M7 12l-6 7" stroke={BLUE} strokeWidth="3" />
    </>
  );
  const icons: [string, ReactNode][] = [
    ["放大选取", <Svg s={20}>{lens}<path d="M9 8h6M12 5v6" /></Svg>],
    ["整屏显示", <Svg s={20}><path d="M4 5V1h15v15h-5M15 4h2M6 4h2" />{<><circle cx="9" cy="11" r="5" fill="#dfe6ea" stroke="#777" /><path d="M5 15l-4 4" stroke={BLUE} strokeWidth="3" /></>}<path d="M12 7l5-4M14 3h3v3" /></Svg>],
    ["局部放大", <Svg s={20}><path d="M5 1h14v14" strokeDasharray="2 2" />{lens}</Svg>],
    ["上一视图", <Svg s={20}><path d="M2 16l9-9 5-5 3 3-5 6-8 7z" fill="#ddd" stroke="#777" /><path d="M19 15h-6v-3l-4 4 4 4v-2h6z" fill={BLUE} stroke="none" /></Svg>],
    ["旋转", <Svg s={21}><path d="M14 16a7 7 0 11-1-12" stroke="#4b93c2" strokeWidth="3.500" /><path d="M11 9h8V1z" fill="#4b93c2" stroke="none" /></Svg>],
    ["工程图", <DrawingIcon s={19} />],
    ["显示样式", <Svg s={20} cls="opacity-40"><path d="M2 4l10-2 5 3v11l-8 3-7-3zM9 7v12M2 4l7 3 8-2" fill="#ddd" /></Svg>],
  ];
  return (
    <div className="absolute left-[503px] top-[4px] flex h-[24px] items-center opacity-75">
      {icons.map(([n, i]) => <button key={n} aria-label={n} className="flex w-[26px] justify-center">{i}</button>)}
      <Caret cls="ml-[4px] opacity-50" />
      <button aria-label="隐藏/显示" className="ml-[8px]"><Svg s={20}><path d="M1 10c5-6 13-6 18 0-5 6-13 6-18 0z" stroke="#888" /><circle cx="10" cy="10" r="4" fill="#555" stroke="none" /><path d="M10 2v16" stroke="#888" /></Svg></button>
      <Caret cls="ml-[7px]" />
      <span className="ml-[10px] size-[16px] rounded-full border border-[#bbb] bg-[#dedede]" />
    </div>
  );
}

function DocButtons() {
  const grey = "#9a9a96";
  return (
    <div className="absolute right-[8px] top-[6px] flex h-[20px] items-center">
      {[
        ["上一个", <><path d="M1 1h18v18H1z" stroke={grey} /><path d="M5 10l6-5v10z" fill={grey} stroke="none" /></>],
        ["下一个", <><path d="M1 1h18v18H1z" stroke={grey} /><path d="M15 10L9 5v10z" fill={grey} stroke="none" /></>],
        ["最小化文档", <path d="M3 17h14" stroke={grey} strokeWidth="4" />],
        ["还原文档", <path d="M1 8h12v9H1zM8 8V3h11v8h-6" stroke={grey} strokeWidth="2" />],
        ["关闭文档", <path d="M2 2l16 16M18 2L2 18" stroke={grey} strokeWidth="2" />],
      ].map(([n, g]) => (
        <button key={n as string} aria-label={n as string} className="flex w-[26px] justify-center"><Svg s={13}>{g}</Svg></button>
      ))}
    </div>
  );
}

function TaskPane() {
  const icons: [string, ReactNode][] = [
    ["资源", <Svg s={19}><path d="M4 9v10h12V9M9 19v-6h4v6" fill="#fff" /><path d="M1 10l9-8 9 8" stroke={BLUE} strokeWidth="2.500" /></Svg>],
    ["设计库", <Svg s={20}><path d="M3 6l4-3 10-1v12l-5 4-9-2z" fill="#eee" strokeWidth="1.200" /><path d="M3 6l3 1v10M6 7l4-4M8 7v10M8 7l4-4M12 7v11M12 7l5-4M8 7h4" strokeWidth="1.200" /></Svg>],
    ["文件探索器", <Svg s={20}><path d="M1 17V4h6l2 2h6v3" fill="#ccc" stroke="#777" /><path d="M2 17l5-8h12l-5 8z" fill="#f4f4f4" stroke="#555" /></Svg>],
    ["视图调色板", <DrawingIcon />],
    ["外观", <svg width="18" height="18" viewBox="0 0 18 18" aria-hidden="true"><path d="M9 9V1a8 8 0 00-8 8z" fill="#2d7fc4" /><path d="M9 9V1a8 8 0 018 8z" fill="#d8352a" /><path d="M9 9H1a8 8 0 008 8z" fill="#3c9c3a" /><path d="M9 9h8a8 8 0 01-8 8z" fill="#eec62c" /><circle cx="9" cy="9" r="8" fill="none" stroke="#555" strokeWidth=".8" /></svg>],
    ["自定义属性", <ListIcon />],
    ["论坛", <Svg s={19}><path d="M1 3h12v8H6l-3 3v-3H1z" fill="#4b8fbd" /><path d="M8 8h11v8h-2v3l-3-3H8z" fill="#eee" /></Svg>],
  ];
  return (
    <div className="absolute right-0 top-[34px] flex w-[26px] flex-col border-l border-t border-[#888]">
      {icons.map(([n, i], k) => (
        <button key={n} aria-label={n} className={`flex h-[24px] items-center justify-center border-b border-[#888] ${k === 0 ? "bg-[#f7f7f7]" : "bg-[#cfcfcf]"}`}>{i}</button>
      ))}
    </div>
  );
}

function Canvas() {
  return (
    <main className="relative min-w-0 flex-1 overflow-hidden bg-gradient-to-br from-[#dde2ee] via-[#d3d8e5] to-[#c3c9da]">
      <CadDrawing />
      <BomTable />
      <div className="absolute left-[262px] top-[422px] flex h-[48px] w-[16px] items-center justify-center border border-black bg-[#bdbdbd]">
        <svg width="12" height="32" viewBox="0 0 12 32" aria-hidden="true"><path d="M11 1v9L1 5.500zM11 11.500v9L1 16zM11 22v9l-10-4.500z" /></svg>
      </div>
      <span className="absolute left-[1200px] top-[554px] size-[9px] border border-black bg-[#b5b5b0]" />
      <p className="absolute left-[291px] top-[244px] whitespace-nowrap text-[32px] font-bold leading-[40px] text-[#ed1c24] [-webkit-text-stroke:6px_#fff] [filter:drop-shadow(2px_2px_1px_#777)] [paint-order:stroke_fill]">对表格进行尺寸设置</p>
      <ViewTools />
      <DocButtons />
      <TaskPane />
      <span className="absolute left-0 top-[428px] flex h-[39px] w-[8px] items-center justify-center border border-l-0 border-[#999] bg-[#f4f4f4]">
        <span className="size-[4px] rounded-full border border-[#888]" />
      </span>
      <ContextMenu />
      <SubMenu />
      <div className="pointer-events-none absolute left-[255px] top-[356px] h-[505px] w-[454px] rounded-[2px] border-[5px] border-[#ee1c24]" />
      <div className="pointer-events-none absolute left-[272px] top-[616px] h-[35px] w-[235px] rounded-[2px] border-[5px] border-[#ee1c24]" />
      <div className="pointer-events-none absolute left-[504px] top-[666px] h-[28px] w-[153px] rounded-[2px] border-[4px] border-[#ee1c24]" />
      <span className="pointer-events-none absolute left-[581px] top-[674px]"><Pointer s={18} /></span>
    </main>
  );
}

function LeftRuler() {
  return (
    <div className="flex w-[24px] shrink-0 overflow-hidden border-r border-black bg-[#c3c5d3] pl-[3px]">
      <div className="w-[17px] border-x border-black bg-[#e3e3d8]">
        <svg width="15" height="895" viewBox="5 150 15 895" aria-hidden="true">
          <path d="M11 401.500h3M11 561.500h3M11 720.500h3M11 1039.500h3" stroke="#000" />
          <path d="M6 232h11v20H6zM6 875h11v9H6z" fill="#fff" />
          <text transform="translate(15 251) rotate(-90)" fontSize="10" fontFamily="Liberation Mono, monospace">100</text>
          <text transform="translate(15 883) rotate(-90)" fontSize="10" fontFamily="Liberation Mono, monospace">0</text>
        </svg>
      </div>
    </div>
  );
}

function BottomBars() {
  return (
    <footer className="shrink-0 bg-gradient-to-b from-[#f0f0f0] to-[#cdcdcd] text-[#333]">
      <div className="flex h-[16px] border-y border-[#8a8a8a] pl-[24px]">
        {[["第一张", "M4 1v8M10 1L5 5l5 4z"], ["上一张", "M9 1L4 5l5 4z"], ["下一张", "M5 1l5 4-5 4z"], ["最后一张", "M4 1l5 4-5 4zM10 1v8"]].map(([n, d]) => (
          <button key={n} aria-label={n} className="flex w-[16px] items-center justify-center border-r border-[#999] bg-[#cfcfcf]">
            <svg width="13" height="10" viewBox="0 0 13 10" fill="#888" stroke="#888" aria-hidden="true"><path d={d} /></svg>
          </button>
        ))}
        <button className="ml-[3px] flex h-[14px] w-[67px] items-center justify-center gap-1 border border-t-0 border-[#888] bg-[#cfcfcf] text-[12px] leading-none"><SheetTab />图纸1</button>
        <button className="flex h-[14px] w-[68px] items-center justify-center gap-px bg-[#f0f0f0] text-[12px] leading-none text-black"><SheetTab />Model</button>
        <button aria-label="添加图纸" className="flex h-[14px] w-[33px] items-center justify-center border border-t-0 border-[#888] bg-[#cfcfcf]">
          <svg width="16" height="12" viewBox="0 0 16 12" aria-hidden="true"><path d="M5 3h9v7l-3-2H5z" fill="#e4edf4" stroke="#46637a" /><path d="M4 0v8M0 4h8M1 1l6 6M7 1L1 7" stroke="#e79a1e" strokeWidth="1.500" /></svg>
        </button>
      </div>
      <div className="flex h-[19px] items-start overflow-hidden pl-px text-[12px] leading-[22px]">
        <span>锁定列宽</span>
        <span className="ml-auto">欠定义</span>
        <span className="ml-[8px] h-[15px] w-[7px] border-x border-[#aaa]" />
        <span className="ml-[4px] w-[85px] whitespace-nowrap border-r border-[#bbb]">在编辑 Model</span>
        <span className="ml-[26px] whitespace-nowrap">1 : 1</span>
        <span className="ml-[24px] text-[6px]">▲</span>
        <span className="ml-[18px] mt-px"><Traffic s={14} /></span>
        <span className="ml-[5px] h-[15px] w-px bg-[#aaa]" />
        <span className="ml-[27px]">MMGS</span>
        <span className="ml-[14px] text-[6px]">▲</span>
        <svg className="ml-[90px] mr-[24px] mt-[2px]" width="16" height="14" viewBox="0 0 16 14" aria-hidden="true"><path d="M1 8l8-7 5 1 1 4-7 7H3z" fill="#efc02c" stroke="#8a6a10" /><circle cx="11.500" cy="4" r="1" fill="#fff" /></svg>
      </div>
    </footer>
  );
}

/* ---------- photo viewer ---------- */
function PhotoDrawing() {
  const t = "Liberation Sans Narrow, Open Sans, sans-serif";
  const cjk = "Noto Sans CJK SC, sans-serif";
  return (
    <svg width="402" height="480" viewBox="1494 150 402 480" className="block" role="img" aria-label="波导组合组件图">
      <g fill="none" stroke="#222" strokeWidth="1.600">
        <path d="M1494 155l352 1 2 468-354-5" />
        <path d="M1795 219h-221l-13 13v221l12 13 227 2M1609 219v7h186M1561 270h7v146h-7M1608 467v-6l192 2" />
        <path d="M1802 270h-191v146l186 1M1804 283h-180v120l175 2M1805 290h-174v107l169 1M1718 219v-29h54v29" />
        {[[1593, 251], [1745, 251], [1593, 343], [1592, 434], [1745, 436]].map(([x, y]) => <circle key={`${x}-${y}`} cx={x} cy={y} r="10.500" />)}
      </g>
      <path d="M1593 343v-10.500a10.500 10.500 0 0110.500 10.500z" />
      <g fill="none" stroke="#444" strokeWidth="0.900">
        <path d="M1795 219c0 18 9 30 7 50l3 21M1799 398c-3 20-2 30 0 40s2 20 0 30" />
        <path d="M1515 219h59M1518 219v247M1515 466h60M1530 251h75M1534 251v183M1530 434.500h75M1543 289h88M1547 289v107M1543 396h88" />
        <path d="M1745 179v301M1552 343.500h255" strokeDasharray="42 4 2 4" />
        <path d="M1593 237v27M1593 330v25M1593 421v80M1733 251h25M1733 436h25M1538 204h37M1538 204l69 59M1573 326h33M1573 326l34 30" />
        <path d="M1631 397v90M1631 484.500l131 1M1593 498.500l171 1.500M1561 453v61M1561 511.500l201 2" />
      </g>
      <path d="M1518 219l-2 9h4zM1534 251l-2 9h4zM1547 289l-2 9h4zM1518 466l-2-9h4zM1534 434l-2-9h4zM1547 396l-2-9h4zM1631 484.500l9-2v4zM1593 498.500l9-2v4zM1561 511.500l9-2v4z" fill="#222" />
      <g fontFamily={t} fontStyle="italic" fill="#222" fontSize="12">
        <text x="1538" y="202">6xØ6.4</text>
        <text x="1570" y="324">2xØ6</text>
        <text x="1595" y="317" fontSize="8">+0.013</text>
        <text x="1603" y="326" fontSize="7">0</text>
        <text transform="translate(1516 349) rotate(-90)">78</text>
        <text transform="translate(1532 349) rotate(-90)">58</text>
        <text transform="translate(1545 349) rotate(-90)">34</text>
        <text x="1738" y="483">72</text>
        <text x="1737" y="498">96</text>
        <text x="1735" y="511">116</text>
      </g>
      <g fill="none" stroke="#222">
        <path d="M1621 528l225 2M1621 541h226M1621 554h226M1621 567h226M1637 528v92M1674 528v92M1747 528v55M1764 528v94M1818 529v54M1690 583v38M1637 595h53M1637 608h53M1690 609h158M1764 597h84M1780 597v12M1802 597v12M1818 597v12" />
        <path d="M1621 527v94M1621 583h227" strokeWidth="1.800" />
      </g>
      <g fontFamily={`Liberation Serif, ${cjk}`} fill="#222" fontSize="10" textAnchor="middle">
        {[["3", "JX1-3", "波　导", "1", "H62", 538], ["2", "JX1-2", "法兰盘", "2", "HPb59-1", 551], ["1", "JX1-1", "轭流内腔", "1", "HPb59-1", 564]].map((r) => (
          <g key={r[0]}>
            <text x="1629" y={r[5]}>{r[0]}</text>
            <text x="1656" y={r[5]}>{r[1]}</text>
            <text x="1713" y={r[5]} fontSize="9">{r[2]}</text>
            <text x="1756" y={r[5]}>{r[3]}</text>
            <text x="1789" y={r[5]}>{r[4]}</text>
          </g>
        ))}
        <text x="1629" y="578" fontSize="8">序号</text>
        <text x="1656" y="578">代 号</text>
        <text x="1714" y="579">名　　称</text>
        <text x="1756" y="579" fontSize="8">数量</text>
        <text x="1788" y="580">材　料</text>
        <text x="1833" y="580" fontSize="9">附注</text>
        <text x="1629" y="592" fontSize="8">设计</text>
        <text x="1629" y="605" fontSize="8">校对</text>
        <text x="1629" y="618" fontSize="8">审图</text>
        <text x="1729" y="601" fontSize="13">波导组合</text>
        <text x="1804" y="594">JX1 - 00</text>
        <text x="1772" y="606" fontSize="8">比例</text>
        <text x="1791" y="607">1:1</text>
        <text x="1810" y="606" fontSize="8">数量</text>
        <text x="1728" y="619" fontSize="9">组件图</text>
        <text x="1805" y="619" fontSize="9">西北工业大学</text>
        <text x="1498" y="572" fontSize="10" textAnchor="start">达到图纸要求;</text>
      </g>
    </svg>
  );
}

function PhotoWindow() {
  return (
    <section aria-label="照片" className="absolute right-[24px] top-0 flex h-[726px] w-[402px] flex-col border-t border-[#8d8d8d] bg-white">
      <div className="flex h-[31px] shrink-0 items-center justify-end bg-[#e6e6e6]">
        {[["最小化照片", "M0 7.500h12"], ["最大化照片", "M2 2.500h10v10H2z"], ["关闭照片", "M2 2l11 11M13 2L2 13"]].map(([n, d]) => (
          <button key={n} aria-label={n} className="flex w-[46px] justify-center"><svg width="15" height="15" viewBox="0 0 15 15" fill="none" stroke="#c4c4c4" aria-hidden="true"><path d={d} /></svg></button>
        ))}
      </div>
      <div className="relative h-[118px] shrink-0">
        <div className="flex h-[48px] items-center pl-[14px] [&_svg]:stroke-black">
          <button aria-label="收藏"><Svg s={18}><path d="M10 18L3 11C-1 5 6 0 10 5c4-5 11 0 7 6z" strokeWidth="1.300" /></Svg></button>
          <button aria-label="旋转照片" className="ml-[32px]"><Svg s={18}><path d="M2 10a8 8 0 1114 6M16 11v5h-5" strokeWidth="1.300" /><circle cx="10" cy="10" r="1" /></Svg></button>
          <button aria-label="裁剪" className="ml-[32px]"><Svg s={18}><path d="M5 1v15h15M0 4h16v16M17 2L6 14" strokeWidth="1.300" /></Svg></button>
          <button aria-label="编辑" className="ml-[102px]"><Svg s={18}><path d="M2 4l3-2 13 14-2 2zM17 1l2 2L5 18l-4 1 1-4z" strokeWidth="1.300" /></Svg></button>
          <svg className="mb-[6px] ml-[9px] shrink-0" width="8" height="6" viewBox="0 0 8 6" fill="none" aria-hidden="true"><path d="M1 1l3 3 3-3" stroke="#1878d0" strokeWidth="1.800" /></svg>
          <button aria-label="共享" className="ml-[40px]"><Svg s={18}><path d="M2 9v10h13v-4M6 15c0-6 3-9 7-9V2l5 6-5 5v-4c-3 0-6 2-7 6z" strokeWidth="1.300" /></Svg></button>
          <button aria-label="更多" className="ml-[41px] text-[18px] leading-none text-black">···</button>
        </div>
        <div className="pointer-events-none absolute left-[80px] top-[14px] flex items-center text-[#787878] opacity-90">
          <svg width="50" height="42" viewBox="0 0 50 42" aria-hidden="true">
            <path d="M0 1c12 0 24 2 33 9v25L0 25z" fill="#808080" />
            <path d="M17 16c10-7 20-8 33-6v22c-12 0-22 3-33 10z" fill="#8a8a8a" />
            <path d="M17 17c5-4 10-6 16-7v25l-16-5z" fill="#4a4a4a" />
          </svg>
          <span className="ml-[3px] whitespace-nowrap text-[31px] font-medium leading-[34px]">中国大学</span>
          <span className="font-['Lato'] text-[34px] leading-[36px]">MOOC</span>
        </div>
      </div>
      <PhotoDrawing />
      <button aria-label="全屏" className="ml-auto mr-[14px] mt-[62px]"><Svg s={20}><path d="M1 19L19 1M12 1h7v7M8 19H1v-7" stroke="#111" strokeWidth="1.500" /></Svg></button>
    </section>
  );
}

/* ---------- desktop ---------- */
function Wallpaper() {
  return (
    <svg className="absolute right-0 top-0 h-full w-[426px]" viewBox="1494 0 426 1080" preserveAspectRatio="none" aria-hidden="true">
      <defs>
        <linearGradient id="base" x1="0" y1="0" x2="0" y2="1">
          <stop offset="0" stopColor="#001b45" /><stop offset=".35" stopColor="#00336f" /><stop offset=".7" stopColor="#004080" /><stop offset=".88" stopColor="#002450" /><stop offset="1" stopColor="#001a3c" />
        </linearGradient>
        <linearGradient id="pane" x1="0" y1="0" x2="1" y2="0.300">
          <stop offset="0" stopColor="#3db4f5" /><stop offset=".6" stopColor="#0f9cf8" /><stop offset="1" stopColor="#0b8cf0" />
        </linearGradient>
        <radialGradient id="glow"><stop offset="0" stopColor="#e8faff" /><stop offset=".08" stopColor="#48b8ff" /><stop offset=".35" stopColor="#0a74d8" stopOpacity=".5" /><stop offset="1" stopColor="#004080" stopOpacity="0" /></radialGradient>
        <filter id="soft" x="-30%" y="-30%" width="160%" height="160%"><feGaussianBlur stdDeviation="14" /></filter>
      </defs>
      <path d="M1494 0h426v1080h-426z" fill="url(#base)" />
      <path d="M1450 805l253 15-100 48-153 52z" fill="#0a86f4" filter="url(#soft)" />
      <path d="M1494 720h209v102l-209-48z" fill="url(#pane)" />
      <path d="M1494 735c40-8 70-9 110-9h-110z" fill="#bfeaff" opacity=".8" />
      <path d="M1494 762l209 58-209-22z" fill="#8fdcff" opacity=".7" />
      <circle cx="1703" cy="821" r="95" fill="url(#glow)" />
      <path d="M1918 0h2v1080h-2z" fill="#08101c" />
    </svg>
  );
}

export default function App() {
  return (
    <div className="relative h-screen w-full overflow-hidden bg-[#002450] font-['Open_Sans','Noto_Sans_CJK_SC',sans-serif]">
      <Wallpaper />
      <PhotoWindow />
      <div className="absolute bottom-0 left-0 right-[426px] top-0 flex flex-col overflow-hidden border-l border-r border-[#3a78b5] bg-[#f7f7f7] shadow-[4px_0_14px_#00000055]">
        <TitleBar />
        <Ribbon />
        <CommandTabs />
        <div className="flex min-h-0 flex-1">
          <LeftRuler />
          <FeaturePanel />
          <Canvas />
        </div>
        <BottomBars />
      </div>
      <button aria-label="播放" className="absolute bottom-[20px] left-[21px] flex size-[59px] items-center justify-center rounded-[3px] bg-[#1c1c1ce6]">
        <svg width="24" height="32" viewBox="0 0 24 32" fill="#9a9a9a" aria-hidden="true"><path d="M0 0l24 16L0 32z" /></svg>
      </button>
      <p className="pointer-events-none absolute bottom-[69px] left-[587px] whitespace-nowrap text-[41px] leading-[56px] text-white [-webkit-text-stroke:7px_#44455e] [paint-order:stroke_fill]">格式化它的高是7。这时候它就符合7了，</p>
      <p className="pointer-events-none absolute bottom-[8px] right-[14px] whitespace-nowrap text-[20px] leading-[26px] text-[#b4bcc8]">CSDN @宽容人厚载物</p>
      <div role="progressbar" aria-label="播放进度" aria-valuenow={94} className="absolute bottom-0 left-0 h-[4px] w-full bg-[#7f8287]">
        <div className="h-full w-[94.5%] bg-[#00cf83]" />
      </div>
    </div>
  );
}
